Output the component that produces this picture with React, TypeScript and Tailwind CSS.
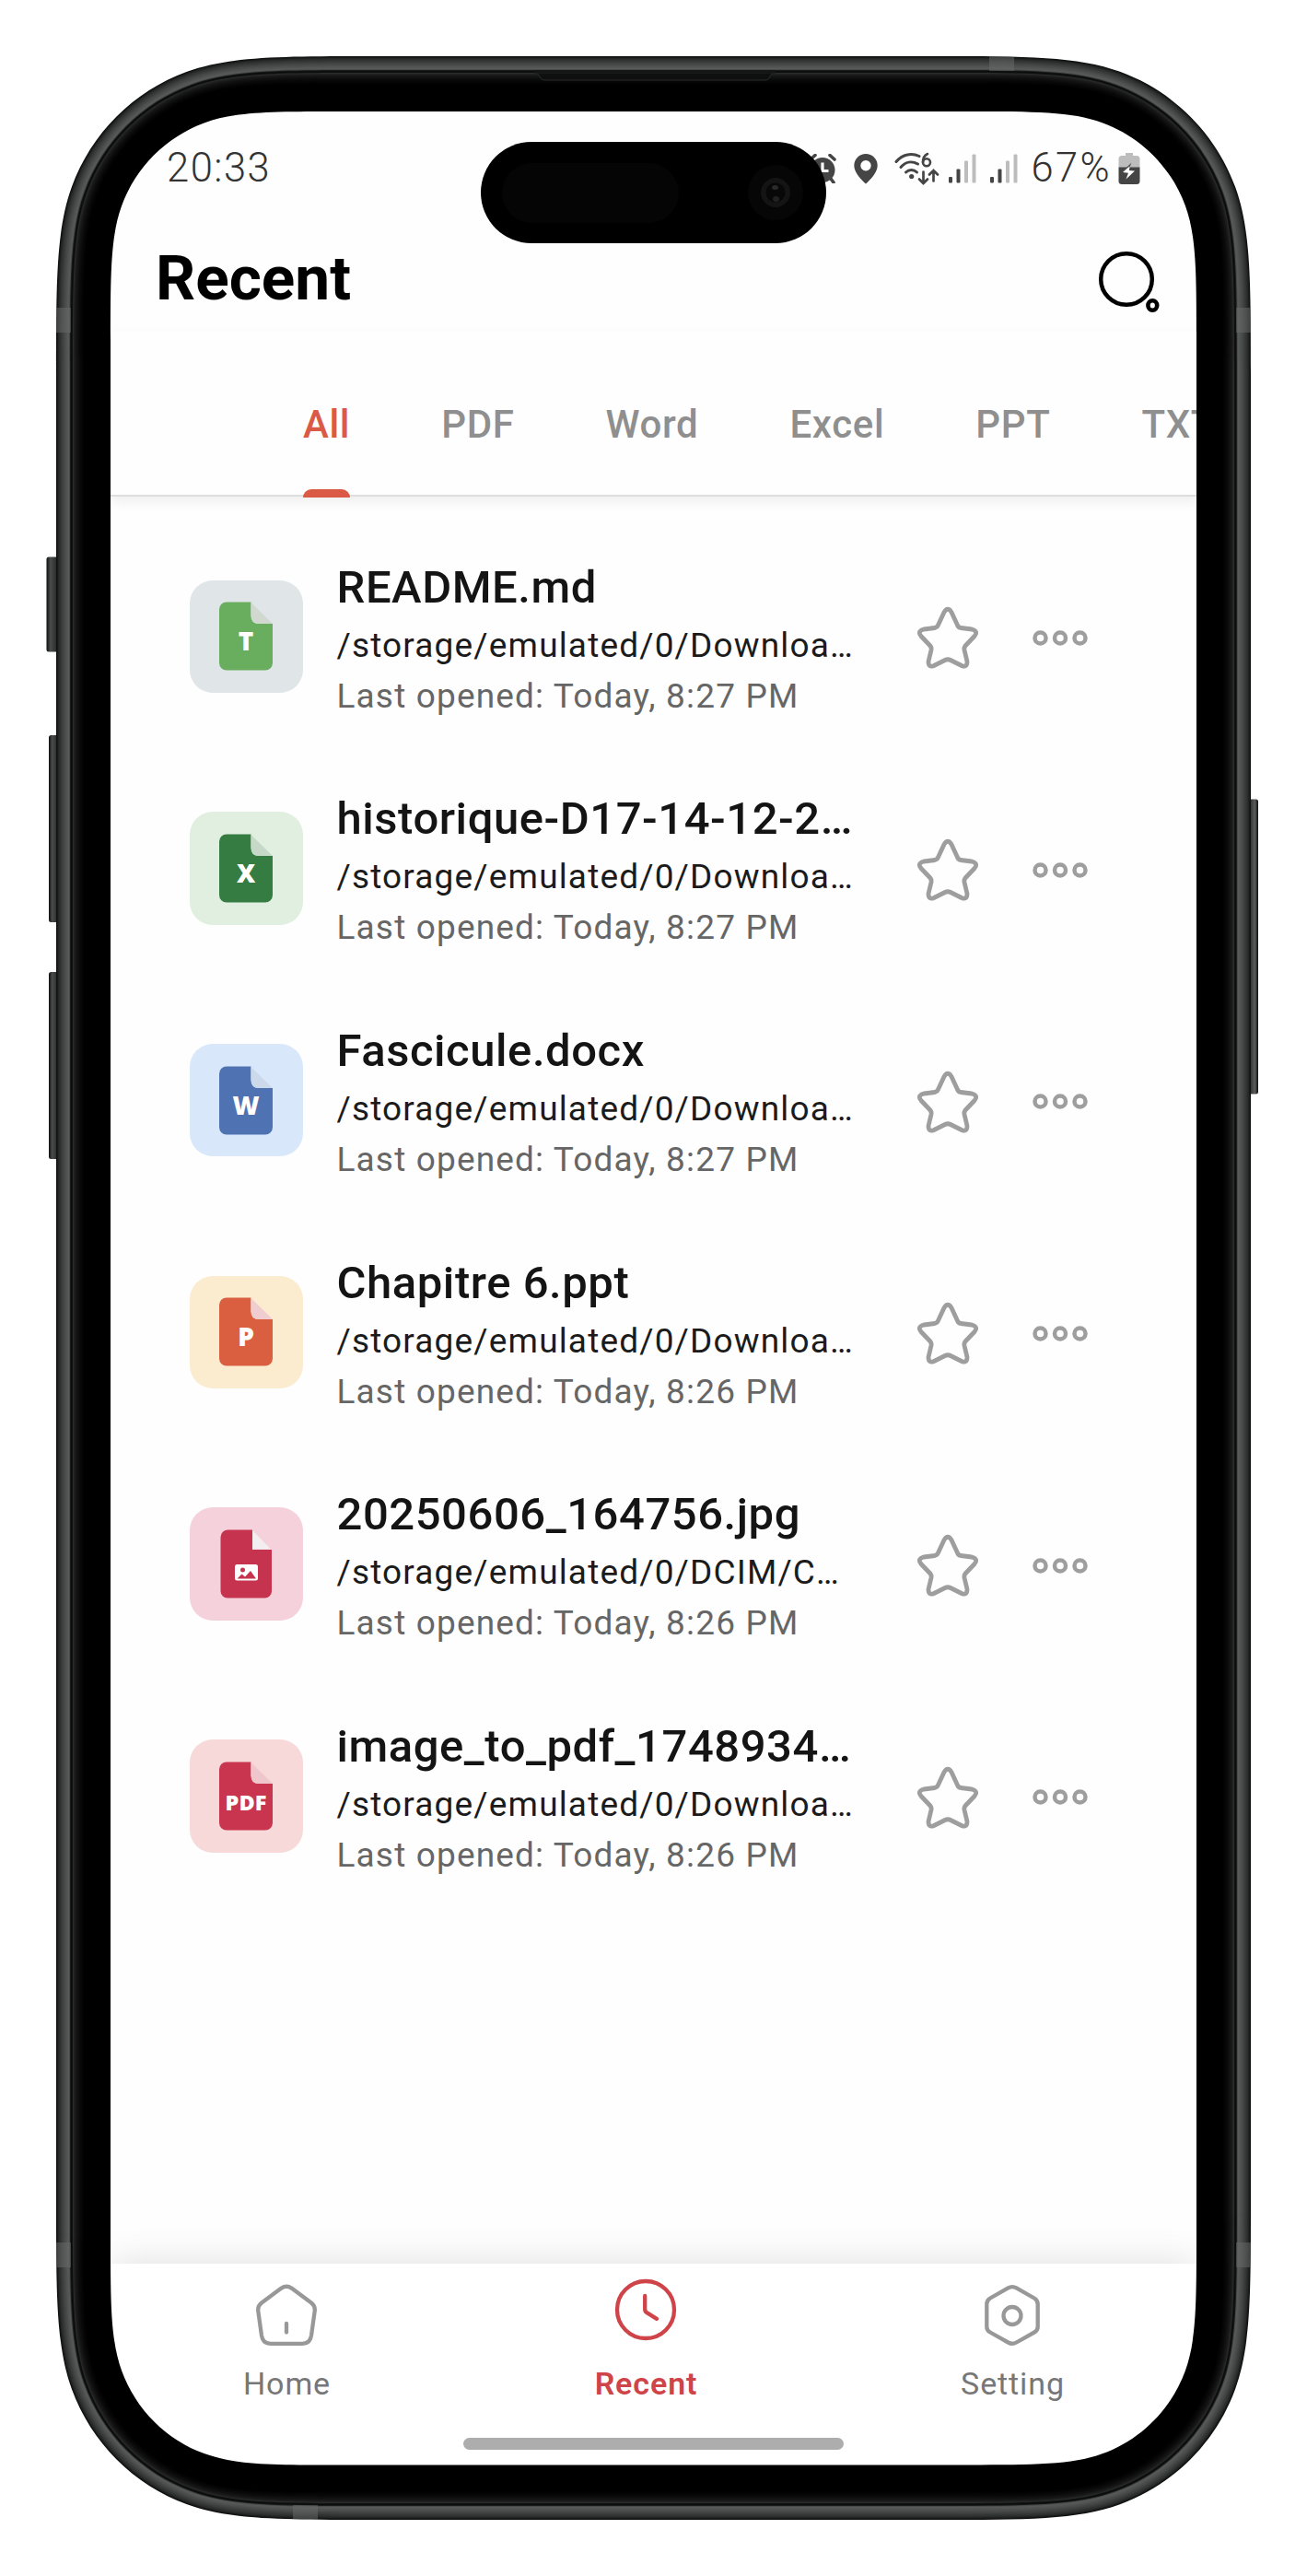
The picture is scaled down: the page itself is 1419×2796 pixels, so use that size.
import React from "react";

type Kind = "txt" | "xls" | "doc" | "ppt" | "img" | "pdf";

interface FileItem {
  kind: Kind;
  name: string;
  path: string;
  opened: string;
}

const FILES: FileItem[] = [
  { kind: "txt", name: "README.md", path: "/storage/emulated/0/Downloa…", opened: "Last opened: Today, 8:27 PM" },
  { kind: "xls", name: "historique-D17-14-12-2…", path: "/storage/emulated/0/Downloa…", opened: "Last opened: Today, 8:27 PM" },
  { kind: "doc", name: "Fascicule.docx", path: "/storage/emulated/0/Downloa…", opened: "Last opened: Today, 8:27 PM" },
  { kind: "ppt", name: "Chapitre 6.ppt", path: "/storage/emulated/0/Downloa…", opened: "Last opened: Today, 8:26 PM" },
  { kind: "img", name: "20250606_164756.jpg", path: "/storage/emulated/0/DCIM/C…", opened: "Last opened: Today, 8:26 PM" },
  { kind: "pdf", name: "image_to_pdf_1748934…", path: "/storage/emulated/0/Downloa…", opened: "Last opened: Today, 8:26 PM" },
];

const KINDS: Record<Kind, { tile: string; fill: string; fold: string; letter: string }> = {
  txt: { tile: "bg-[#e0e5e8]", fill: "#69ad5e", fold: "#d0d8d0", letter: "T" },
  xls: { tile: "bg-[#e0efdf]", fill: "#347c42", fold: "#c6d8c8", letter: "X" },
  doc: { tile: "bg-[#d8e8fa]", fill: "#4e72b2", fold: "#cbd9ea", letter: "W" },
  ppt: { tile: "bg-[#fbebcf]", fill: "#d95f40", fold: "#f0cdd0", letter: "P" },
  img: { tile: "bg-[#f5d1dc]", fill: "#c5334f", fold: "#f3eef0", letter: "" },
  pdf: { tile: "bg-[#f7d9d9]", fill: "#c9354e", fold: "#eec6cb", letter: "PDF" },
};

const TABS = ["All", "PDF", "Word", "Excel", "PPT", "TXT"];

/* Rounded rectangle with continuous-curvature corners. */
function smoothRect(x: number, y: number, w: number, h: number, r: number): string {
  const a = 1.52866483 * r;
  const b = 1.08849296 * r;
  const c = 0.837 * r;
  const d = 0.63149379 * r;
  const e = 0.37282383 * r;
  const f = 0.16905956 * r;
  const g = 0.07491139 * r;
  const R = x + w;
  const B = y + h;
  return [
    `M${x + a} ${y}L${R - a} ${y}`,
    `C${R - b} ${y} ${R - c} ${y} ${R - d} ${y + g}`,
    `C${R - e} ${y + f} ${R - f} ${y + e} ${R - g} ${y + d}`,
    `C${R} ${y + c} ${R} ${y + b} ${R} ${y + a}`,
    `L${R} ${B - a}`,
    `C${R} ${B - b} ${R} ${B - c} ${R - g} ${B - d}`,
    `C${R - f} ${B - e} ${R - e} ${B - f} ${R - d} ${B - g}`,
    `C${R - c} ${B} ${R - b} ${B} ${R - a} ${B}`,
    `L${x + a} ${B}`,
    `C${x + b} ${B} ${x + c} ${B} ${x + d} ${B - g}`,
    `C${x + e} ${B - f} ${x + f} ${B - e} ${x + g} ${B - d}`,
    `C${x} ${B - c} ${x} ${B - b} ${x} ${B - a}`,
    `L${x} ${y + a}`,
    `C${x} ${y + b} ${x} ${y + c} ${x + g} ${y + d}`,
    `C${x + f} ${y + e} ${x + e} ${y + f} ${x + d} ${y + g}`,
    `C${x + c} ${y} ${x + b} ${y} ${x + a} ${y}Z`,
  ].join("");
}

/* Outline of the phone body, moved inwards by the given number of pixels. */
function bodyRect(inset: number): string {
  return smoothRect(61 + inset, 61 + inset, 1297 - 2 * inset, 2674 - 2 * inset, 225 - inset * 1.07);
}

/* Colour of the metal rim, one entry per pixel inwards from the outer edge. */
const RIM = [
  "#101111", "#191b1b", "#242626", "#2b2d2d", "#313333", "#363838", "#3b3d3d", "#404242",
  "#454747", "#494b4b", "#4d4f4f", "#515353", "#555757", "#585a5a", "#4a4c4c", "#1a1b1b",
  "#0b0c0c", "#101111", "#2a2b2b", "#202121", "#1b1b1b", "#171717", "#131313", "#101010",
  "#0d0d0d", "#0a0a0a", "#080808", "#060606", "#040404", "#020202", "#000000",
];

const HOLE = smoothRect(120, 121, 1179, 2554.5, 162);

function Frame() {
  return (
    <svg className="pointer-events-none absolute inset-0" width="1419" height="2796" viewBox="0 0 1419 2796">
      <defs>
        <clipPath id="body">
          <path d={bodyRect(0)} />
        </clipPath>
        <linearGradient id="key" x1="0" x2="1" y1="0" y2="0">
          <stop offset="0" stopColor="#0c0d0d" />
          <stop offset="0.3" stopColor="#4a4c4c" />
          <stop offset="1" stopColor="#1c1d1d" />
        </linearGradient>
        <linearGradient id="keyRight" x1="1" x2="0" y1="0" y2="0">
          <stop offset="0" stopColor="#0c0d0d" />
          <stop offset="0.3" stopColor="#5a5c5c" />
          <stop offset="1" stopColor="#151616" />
        </linearGradient>
      </defs>
      <rect x="50.5" y="604.5" width="14" height="103" rx="2.5" fill="url(#key)" />
      <rect x="53" y="798" width="12" height="203" rx="2.5" fill="url(#key)" />
      <rect x="53" y="1055" width="12" height="203" rx="2.5" fill="url(#key)" />
      <rect x="1354" y="867.5" width="12" height="320" rx="2.5" fill="url(#keyRight)" />
      {RIM.map((color, i) => (
        <path
          key={i}
          fillRule="evenodd"
          fill={color}
          d={bodyRect(i) + (i === RIM.length - 1 ? HOLE : bodyRect(i + 3))}
        />
      ))}
      <path d="M580 79h262c-4 0-5 2-6 4-1 3-3 4-6 4H592c-3 0-5-1-6-4-1-2-2-4-6-4z" fill="#0e0f0f" stroke="#2a2b2b" strokeWidth="1" />
      <rect x="580" y="76" width="262" height="3.4" fill="#141515" />
      <g clipPath="url(#body)" fill="#6a6c6c" fillOpacity="0.5">
        <rect x="61" y="334" width="16" height="27" />
        <rect x="1342" y="334" width="16" height="27" />
        <rect x="61" y="2434" width="16" height="27" />
        <rect x="1342" y="2434" width="16" height="27" />
        <rect x="1074" y="61" width="27" height="16" />
        <rect x="318" y="2719" width="27" height="16" />
      </g>
    </svg>
  );
}

function Island() {
  return (
    <div className="absolute left-[522px] top-[154px] flex h-[110px] w-[375px] items-center justify-between rounded-full bg-black pl-[23px] pr-[25px]">
      <div className="h-[65px] w-[192px] rounded-full bg-[#050505]" />
      <div className="flex size-[60px] items-center justify-center rounded-full bg-[#060606]">
        <svg width="32" height="32" viewBox="0 0 32 32">
          <circle cx="16" cy="16" r="16" fill="#141414" />
          <circle cx="16" cy="16" r="10.5" fill="#080808" />
          <ellipse cx="15.500" cy="10.500" rx="3.500" ry="2.500" fill="#2a2a2a" />
          <ellipse cx="16.500" cy="23" rx="3.500" ry="3" fill="#222222" />
        </svg>
      </div>
    </div>
  );
}

function Signal() {
  return (
    <svg width="30" height="32" viewBox="0 0 30 32">
      <rect x="0" y="25" width="4" height="6.500" rx="1" fill="#454545" />
      <rect x="8.500" y="16.500" width="4" height="15" rx="1" fill="#454545" />
      <rect x="17" y="7.500" width="4" height="24" rx="1" fill="#bdbdbd" />
      <rect x="25.500" y="0.500" width="4" height="31" rx="1" fill="#bdbdbd" />
    </svg>
  );
}

function StatusBar() {
  return (
    <div className="flex h-[123px] items-center pl-[61px] pr-[61px] text-[43.5px] font-light leading-none text-[#333333]">
      <span className="mt-[1px] tracking-[1.5px]">20:33</span>
      <svg className="ml-auto" width="34" height="32" viewBox="0 0 34 32">
        <circle cx="17" cy="17.500" r="13.500" fill="#454545" />
        <path d="M4 6l5-4.500M30 6l-5-4.500M8 27l-3 4M26 27l3 4" stroke="#454545" strokeWidth="3.600" strokeLinecap="round" />
        <path d="M17 9.500v9h6.500" fill="none" stroke="#fff" strokeWidth="3.200" />
      </svg>
      <svg className="ml-[17px]" width="26" height="34" viewBox="0 0 26 34">
        <path fillRule="evenodd" fill="#454545" d="M13 1a12.700 12.700 0 0 0-12.700 12.700C.3 21 8 29 13 33.500 18 29 25.700 21 25.700 13.700A12.700 12.700 0 0 0 13 1zm0 7a5.700 5.700 0 1 1 0 11.400A5.700 5.700 0 0 1 13 8z" />
      </svg>
      <svg className="ml-[18px]" width="50" height="36" viewBox="0 0 50 36">
        <g fill="none" stroke="#454545" strokeWidth="3" strokeLinecap="round">
          <path d="M2 10.500C9 2 19 0.800 27 4.500" />
          <path d="M7 16.500C12 10.500 19 9.500 25.500 13" />
          <path d="M12.500 22c3.500-3.500 8.500-3.500 12 0" />
          <path d="M31.500 21.500v12.500m-4.500-4.500l4.500 4.500 4.500-4.500" strokeWidth="2.700" />
          <path d="M42.500 31.500V20m-4.500 4.500l4.500-4.500 4.500 4.500" strokeWidth="2.700" />
          <circle cx="35" cy="11.300" r="4" strokeWidth="2.600" />
          <path d="M31 11c0-4 2-7.500 5-9" strokeWidth="2.600" />
        </g>
        <circle cx="18.700" cy="26.500" r="2.600" fill="#454545" />
      </svg>
      <span className="ml-[9px] flex gap-[15px]">
        <Signal />
        <Signal />
      </span>
      <span className="ml-[14px] mt-[1px] tracking-[2.4px]">67%</span>
      <svg className="ml-[7px]" width="24" height="36" viewBox="0 0 24 36">
        <path d="M8 1h8v3h4a3.500 3.500 0 0 1 3.500 3.500V17H.5V7.500A3.500 3.500 0 0 1 4 4h4z" fill="#bdbdbd" />
        <path d="M.5 16.500h23v15A3.500 3.500 0 0 1 20 35H4a3.500 3.500 0 0 1-3.500-3.500z" fill="#454545" />
        <path d="M14.500 11.500L5 20.500h6z" fill="#555" />
        <path d="M12.500 15.500L5 22l6 .8L8.500 29.500l9.500-9-6-.6z" fill="#fff" />
      </svg>
    </div>
  );
}

function DocIcon({ kind }: { kind: Kind }) {
  const k = KINDS[kind];
  if (kind === "img") {
    return (
      <svg width="58" height="75" viewBox="0 0 58 75">
        <path d="M9.500 0.500H36V22h21v45a7.500 7.500 0 0 1-7.500 7.500h-40A7.500 7.500 0 0 1 1.500 67V8.500a8 8 0 0 1 8-8z" fill={k.fill} />
        <path d="M36 1l20 20.500H36z" fill={k.fold} />
        <rect x="17" y="38" width="25" height="17.500" rx="2.500" fill="#fff" />
        <circle cx="25.500" cy="44" r="2.500" fill={k.fill} />
        <path d="M19.500 53.500l5-5 3.500 3 6-6.500 6 8.500z" fill={k.fill} />
      </svg>
    );
  }
  return (
    <svg width="58" height="75" viewBox="0 0 58 75">
      <path d="M8 0.500h26.500v15q0 8.500 8.500 8.500h15v42.500a8 8 0 0 1-8 8H8a8 8 0 0 1-8-8v-58a8 8 0 0 1 8-8z" fill={k.fill} />
      <path d="M34.500 1L58 24H44q-9.500 0-9.500-9.500z" fill={k.fold} />
      <text
        x="29"
        y={kind === "pdf" ? 53 : 53}
        textAnchor="middle"
        fill="#fff"
        fontFamily='"Open Sans", "Noto Sans", sans-serif'
        fontWeight="800"
        fontSize={kind === "pdf" ? 23.5 : 28}
      >
        {k.letter}
      </text>
    </svg>
  );
}

function Star() {
  return (
    <svg width="68" height="68" viewBox="0 0 68 68" fill="none" stroke="#9e9e9e" strokeWidth="4.800" strokeLinejoin="round">
      <path d="M30 6.500Q34 0 38 6.500L44.500 20.500Q45.500 23 48 23.500L60 25Q67.500 27 63 32.500L53 43Q51.500 45 52 47.500L55 60Q55 67 49 64.500L37 58.500Q34 57 31 58.500L19 64.500Q13 67 13 60L16 47.500Q16.500 45 15 43L5 32.500Q0.500 27 8 25L20 23.500Q22.500 23 23.500 20.500Z" />
    </svg>
  );
}

function Dots() {
  return (
    <svg width="60" height="17" viewBox="0 0 60 17" fill="none" stroke="#9e9e9e" strokeWidth="4.500">
      <circle cx="8.500" cy="8.500" r="6" />
      <circle cx="30" cy="8.500" r="6" />
      <circle cx="51.500" cy="8.500" r="6" />
    </svg>
  );
}

function FileRow({ item }: { item: FileItem }) {
  return (
    <li className="flex h-[251.7px] items-center pl-[86px]">
      <div className={`flex size-[122.5px] shrink-0 items-center justify-center rounded-[25px] ${KINDS[item.kind].tile}`}>
        <DocIcon kind={item.kind} />
      </div>
      <div className="w-[626px] shrink-0 whitespace-nowrap pl-[37px] pt-[4.2px]">
        <h2 className="text-[49px] font-medium leading-[66px] tracking-[0.55px] text-[#141414]">{item.name}</h2>
        <p className="text-[37px] leading-[59px] tracking-[1.16px] text-[#1b1b1b]">{item.path}</p>
        <p className="text-[37px] leading-[51.5px] tracking-[1.16px] text-[#666666]">{item.opened}</p>
      </div>
      <button className="ml-[40px] mt-[3px]">
        <Star />
      </button>
      <button className="ml-[58.5px] mt-[3px]">
        <Dots />
      </button>
    </li>
  );
}

function NavItem({ label, active, children }: { label: string; active?: boolean; children: React.ReactNode }) {
  return (
    <div
      className={
        active
          ? "flex w-[200px] flex-col items-center text-[34px] font-semibold leading-[44px] tracking-[0.9px] text-[#cf4448]"
          : "flex w-[200px] flex-col items-center text-[34px] leading-[44px] tracking-[0.9px] text-[#777777]"
      }
    >
      <div className="flex h-[101.500px] flex-col pt-[16px]">{children}</div>
      <span className="ml-[1px]">{label}</span>
    </div>
  );
}

export default function App() {
  return (
    <div className="relative h-[2796px] w-[1419px] overflow-hidden bg-white px-[120px] pt-[121px] font-['Roboto',sans-serif]">
      <main className="flex h-[2555px] w-[1179px] flex-col overflow-hidden bg-[#fefefe]">
        <StatusBar />
        <header className="flex h-[116px] items-center justify-between pl-[49px] pr-[40px]">
          <h1 className="text-[67.5px] font-bold leading-none text-black">Recent</h1>
          <svg width="68" height="70" viewBox="0 0 68 70" fill="none" stroke="#000" className="mt-[5px]">
            <circle cx="32" cy="33" r="27.800" strokeWidth="4.500" />
            <ellipse cx="60.300" cy="61.500" rx="4.900" ry="5.300" strokeWidth="4.600" />
          </svg>
        </header>
        <nav className="relative z-10 flex h-[179px] shrink-0 items-stretch border-b-2 border-[#dedede] bg-[#fefefe] pl-[209px] shadow-[0_5px_12px_rgba(0,0,0,0.07)]">
          {TABS.map((tab, i) => (
            <div
              key={tab}
              className={
                i === 0
                  ? "relative mr-[99px] flex items-center pt-[24px] text-[42px] font-medium tracking-[0.65px] text-[#da5a45]"
                  : "mr-[99px] flex items-center pt-[24px] text-[42px] font-medium tracking-[0.65px] text-[#8f8f8f]"
              }
            >
              {tab}
              {i === 0 && <span className="absolute -bottom-[3px] left-0 h-[9.500px] w-full rounded-t-[9px] bg-[#da5a45]" />}
            </div>
          ))}
        </nav>
        <ul className="flex-1 pt-[26px]">
          {FILES.map((f) => (
            <FileRow key={f.name} item={f} />
          ))}
        </ul>
        <footer className="relative flex h-[219px] shrink-0 flex-col items-center bg-white shadow-[0_0_40px_rgba(0,0,0,0.13)]">
          <div className="flex w-full pl-[91px] pt-[6px]">
            <NavItem label="Home">
              <svg width="68" height="68" viewBox="0 0 68 68" fill="none" stroke="#989898" strokeWidth="4.300" strokeLinecap="round" strokeLinejoin="round">
                <path d="M28.500 4.600Q34 1 39.500 4.600L61 20.500Q65.500 24 64.700 29.500L61 56Q59.500 64.800 51 64.800H17Q8.500 64.800 7 56L3.300 29.500Q2.500 24 7 20.500Z" />
                <path d="M34 43v9.500" />
              </svg>
            </NavItem>
            <div className="ml-[190px]">
              <NavItem label="Recent" active>
                <svg className="-mt-[6px]" width="68" height="68" viewBox="0 0 68 68" fill="none" stroke="#cf4448" strokeWidth="4.300" strokeLinecap="round" strokeLinejoin="round">
                  <circle cx="34" cy="34" r="31" />
                  <path d="M33.200 19v14.500q0 2.500 2 3.700L46 43.800" />
                </svg>
              </NavItem>
            </div>
            <div className="ml-[198px]">
              <NavItem label="Setting">
                <svg width="68" height="68" viewBox="0 0 68 68" fill="none" stroke="#989898" strokeWidth="4.300" strokeLinejoin="round">
                  <path d="M29.500 4.300Q34 1.800 38.500 4.300L58 15.500Q61.700 17.800 61.700 22V46.500Q61.700 50.500 58 52.500L38.500 63.500Q34 66 29.500 63.500L10 52.500Q6.300 50.500 6.300 46.500V22Q6.300 17.800 10 15.500Z" />
                  <circle cx="34" cy="34.500" r="9.500" />
                </svg>
              </NavItem>
            </div>
          </div>
          <div className="mt-[37.500px] h-[13px] w-[413px] rounded-full bg-[#adadad]" />
        </footer>
      </main>
      <Island />
      <Frame />
    </div>
  );
}
